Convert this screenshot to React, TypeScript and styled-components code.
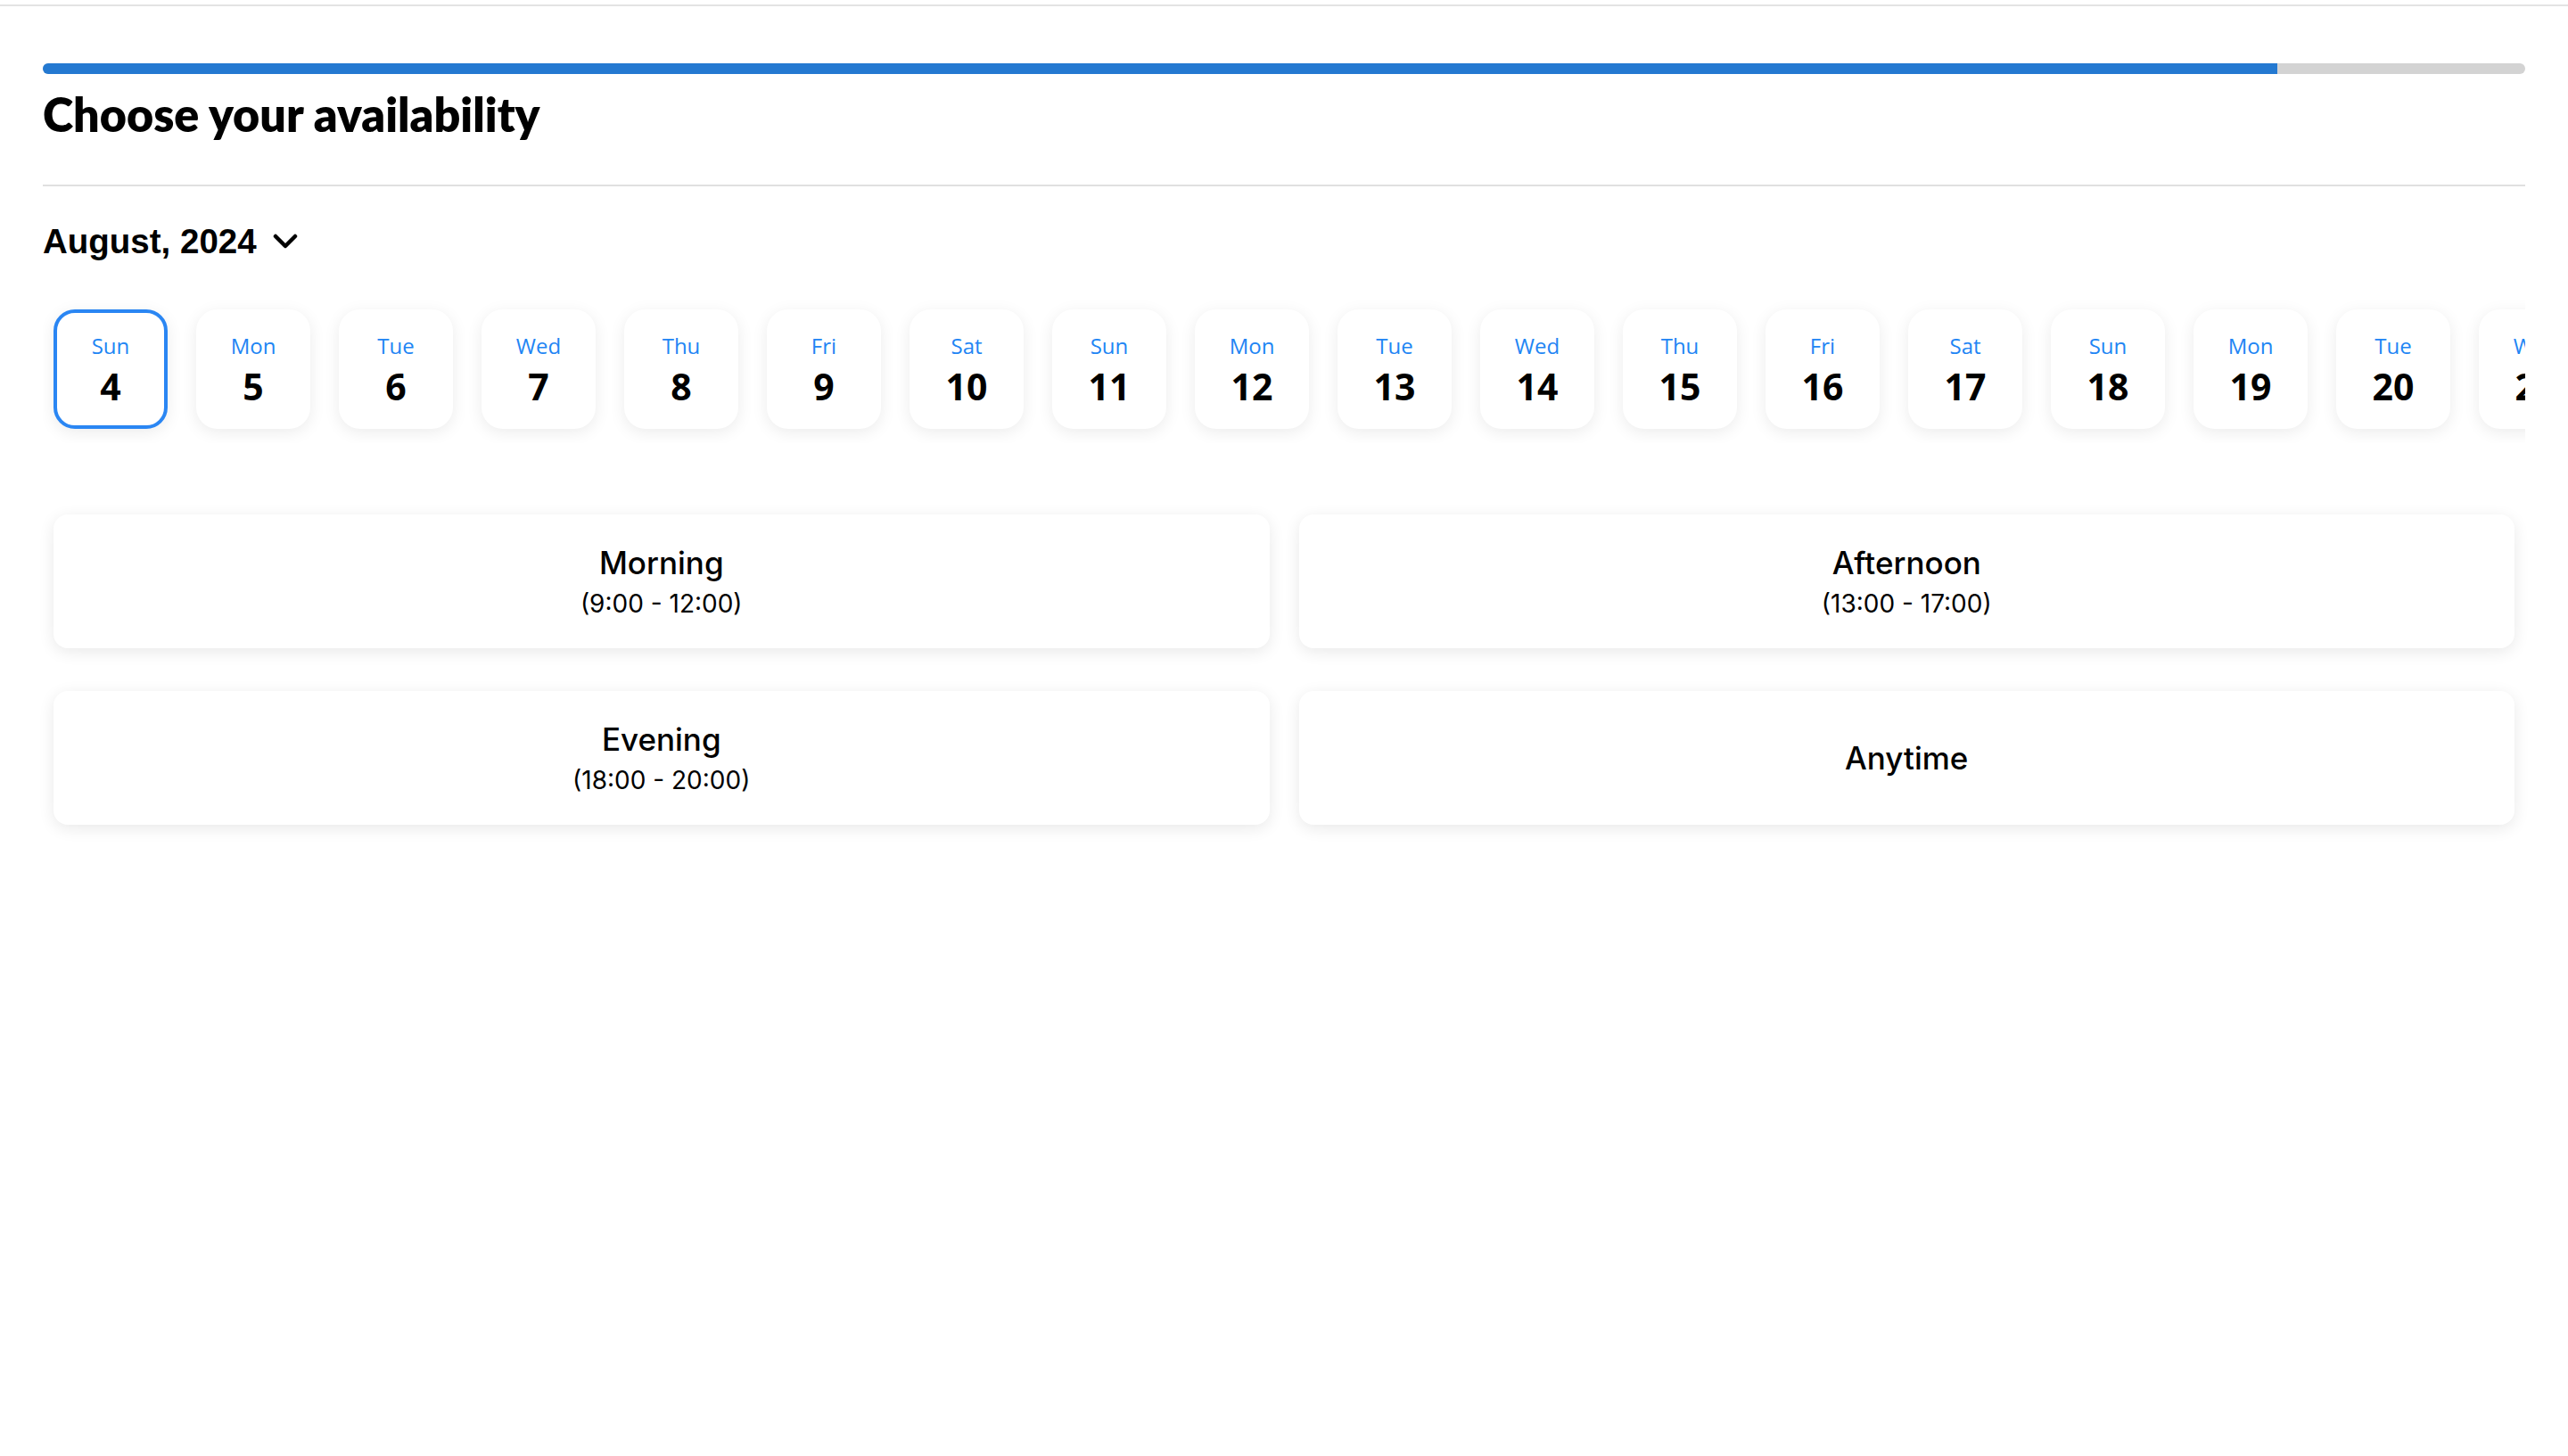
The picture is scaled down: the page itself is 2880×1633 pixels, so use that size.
import React, { useState } from "react";
import styled, { createGlobalStyle } from "styled-components";

const GlobalStyle = createGlobalStyle`
  html, body {
    margin: 0;
    padding: 0;
    background: #ffffff;
    font-family: "Inter", "Liberation Sans", sans-serif;
    color: #000000;
  }
  * { box-sizing: border-box; }
`;

const TopRule = styled.div`
  height: 7px;
  border-bottom: 2px solid #e3e3e3;
`;

const Main = styled.main`
  padding: 0 48px;
`;

const ProgressTrack = styled.div`
  margin-top: 64px;
  height: 12px;
  border-radius: 6px;
  background: #d3d3d3;
  overflow: hidden;
`;

const ProgressFill = styled.div`
  height: 100%;
  background: #2479d1;
`;

const Title = styled.h1`
  margin: 16px 0 0;
  font-family: "Lato", "Inter", sans-serif;
  font-weight: 800;
  font-size: 52px;
  line-height: 58px;
`;

const Divider = styled.hr`
  margin: 50px 0 0;
  border: none;
  height: 2px;
  background: #e0e0e0;
`;

const MonthButton = styled.button`
  margin-top: 38px;
  display: inline-flex;
  align-items: center;
  gap: 18px;
  padding: 0;
  border: none;
  background: none;
  font-family: "Liberation Sans", Arial, sans-serif;
  font-weight: 700;
  font-size: 38.5px;
  line-height: 48px;
  color: #000;
  cursor: pointer;
`;

const DayStrip = styled.div`
  margin-top: 40px;
  display: flex;
  gap: 32px;
  padding: 12px 12px 16px;
  overflow: hidden;
`;

const DayCard = styled.button<{ $selected: boolean }>`
  flex: 0 0 128px;
  height: 134px;
  border-radius: 24px;
  background: #ffffff;
  border: 4px solid ${(p) => (p.$selected ? "#2a86f3" : "transparent")};
  box-shadow: 0 4px 18px rgba(0, 0, 0, 0.08);
  display: flex;
  flex-direction: column;
  align-items: center;
  justify-content: center;
  padding: 0;
  cursor: pointer;
  font-family: "Open Sans", "Noto Sans", sans-serif;
`;

const DayName = styled.span`
  font-size: 24px;
  line-height: 32px;
  color: #2185f4;
  font-weight: 400;
`;

const DayNumber = styled.span`
  margin-top: 6px;
  font-size: 41px;
  line-height: 46px;
  font-weight: 700;
  color: #000;
`;

const SlotGrid = styled.div`
  margin-top: 80px;
  padding: 0 12px 24px;
  display: grid;
  grid-template-columns: 1fr 1fr;
  column-gap: 33px;
  row-gap: 48px;
`;

const SlotCard = styled.button`
  height: 150px;
  border: none;
  border-radius: 16px;
  background: #ffffff;
  box-shadow: 0 4px 18px rgba(0, 0, 0, 0.09);
  display: flex;
  flex-direction: column;
  align-items: center;
  justify-content: center;
  gap: 8px;
  cursor: pointer;
  font-family: "Inter", "Liberation Sans", sans-serif;
  color: #000;
`;

const SlotTitle = styled.span`
  font-size: 35px;
  line-height: 42px;
  font-weight: 500;
`;

const SlotTime = styled.span`
  font-size: 28px;
  line-height: 34px;
  font-weight: 400;
`;

const Chevron = () => (
  <svg width="28" height="18" viewBox="0 0 28 18" fill="none">
    <path d="M3 3 L14 14 L25 3" stroke="#000" strokeWidth="4.5" strokeLinecap="round" strokeLinejoin="round" />
  </svg>
);

const DAYS = ["Sun", "Mon", "Tue", "Wed", "Thu", "Fri", "Sat"];

const dates = Array.from({ length: 18 }, (_, i) => ({
  day: DAYS[i % 7],
  num: 4 + i,
}));

const slots = [
  { title: "Morning", time: "(9:00 - 12:00)" },
  { title: "Afternoon", time: "(13:00 - 17:00)" },
  { title: "Evening", time: "(18:00 - 20:00)" },
  { title: "Anytime" },
];

export default function App() {
  const [selected, setSelected] = useState(4);
  const progress = 0.9;
  return (
    <>
      <GlobalStyle />
      <TopRule />
      <Main>
        <ProgressTrack>
          <ProgressFill style={{ width: `${progress * 100}%` }} />
        </ProgressTrack>
        <Title>Choose your availability</Title>
        <Divider />
        <MonthButton>
          August, 2024
          <Chevron />
        </MonthButton>
        <DayStrip>
          {dates.map((d) => (
            <DayCard key={d.num} $selected={d.num === selected} onClick={() => setSelected(d.num)}>
              <DayName>{d.day}</DayName>
              <DayNumber>{d.num}</DayNumber>
            </DayCard>
          ))}
        </DayStrip>
        <SlotGrid>
          {slots.map((s) => (
            <SlotCard key={s.title}>
              <SlotTitle>{s.title}</SlotTitle>
              {s.time && <SlotTime>{s.time}</SlotTime>}
            </SlotCard>
          ))}
        </SlotGrid>
      </Main>
    </>
  );
}
